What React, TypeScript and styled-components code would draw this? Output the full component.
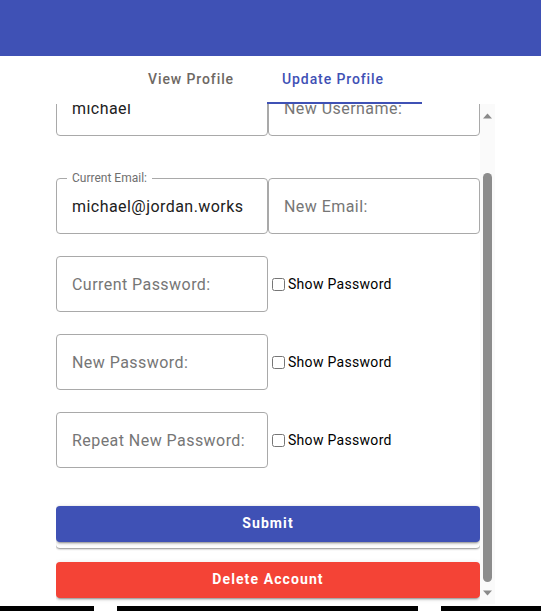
import React, { useLayoutEffect, useRef } from "react";
import styled, { createGlobalStyle } from "styled-components";

const Global = createGlobalStyle`
  html, body { margin: 0; padding: 0; overflow: hidden; background: #fff; }
  body { font-family: Roboto, "Liberation Sans", Arial, sans-serif; }
  * { box-sizing: border-box; }
`;

const Page = styled.div`
  width: 541px;
  height: 611px;
  display: flex;
  flex-direction: column;
`;

const Header = styled.header`
  height: 56px;
  background: #3f51b5;
  flex: none;
`;

const TabBar = styled.nav`
  position: relative;
  height: 48px;
  flex: none;
  display: flex;
  align-items: center;
  padding-left: 132px;
  gap: 16px;
`;

const Tab = styled.button<{ $active?: boolean }>`
  border: 0;
  background: none;
  padding: 0 16px 3px;
  height: 48px;
  font-family: Roboto, sans-serif;
  font-size: 14px;
  font-weight: 500;
  letter-spacing: 0.9px;
  white-space: nowrap;
  color: ${(p) => (p.$active ? "#3f51b5" : "#6e6863")};
  cursor: pointer;
`;

const Indicator = styled.span`
  position: absolute;
  left: 267px;
  bottom: 0;
  width: 155px;
  height: 2px;
  background: #3f51b5;
`;

const ScrollArea = styled.div`
  margin-left: 56px;
  width: 439px;
  height: 500px;
  flex: none;
  display: flex;
`;

const Viewport = styled.div`
  width: 424px;
  height: 500px;
  overflow: hidden;
  flex: none;
`;

const ScrollBar = styled.div`
  width: 15px;
  height: 500px;
  flex: none;
  background: #fafafa;
  display: flex;
  flex-direction: column;
  align-items: center;
`;

const Arrow = styled.svg<{ $mt: number }>`
  display: block;
  width: 9px;
  height: 6px;
  margin-top: ${(p) => p.$mt}px;
  flex: none;
`;

const Thumb = styled.div`
  width: 9px;
  height: 409px;
  margin-top: 54px;
  border-radius: 5px;
  background: #8c8c8c;
  flex: none;
`;

const Content = styled.div`
  width: 424px;
  padding: 42px 0 16px;
  display: flex;
  flex-direction: column;
`;

const Row = styled.div<{ $mt?: number }>`
  display: grid;
  grid-template-columns: 212px 212px;
  align-items: center;
  margin-top: ${(p) => p.$mt ?? 0}px;
`;

const Field = styled.div`
  position: relative;
  height: 56px;
  border: 1px solid #a9a9a9;
  border-radius: 4px;
  display: flex;
  align-items: center;
`;

const FloatLabel = styled.span`
  position: absolute;
  left: 10px;
  top: -7px;
  padding: 0 5px;
  background: #fff;
  font-size: 12px;
  line-height: 12px;
  color: #6f6f6f;
`;

const Input = styled.input`
  border: 0;
  outline: none;
  background: transparent;
  width: 100%;
  height: 100%;
  padding: 0 15px;
  font-family: Roboto, sans-serif;
  font-size: 16px;
  color: #212121;
  letter-spacing: 0.45px;
  &::placeholder { color: #767676; opacity: 1; }
`;

const ShowLabel = styled.label`
  display: flex;
  align-items: center;
  font-family: Roboto, sans-serif;
  font-size: 14px;
  letter-spacing: 0.3px;
  color: #000;
  input { margin: 3px 3px 3px 4px; width: 13px; height: 13px; }
`;

const ButtonShell = styled.div`
  height: 42px;
  border-radius: 4px;
  box-shadow: 0 1px 2px rgba(0, 0, 0, 0.45);
  margin-top: 38px;
`;

const ActionButton = styled.button<{ $color: string; $mt?: number }>`
  display: block;
  width: 424px;
  height: 36px;
  margin-top: ${(p) => p.$mt ?? 0}px;
  padding: 0 0 2px;
  border: 0;
  border-radius: 4px;
  background: ${(p) => p.$color};
  color: #fff;
  font-family: Roboto, sans-serif;
  font-size: 14px;
  font-weight: 700;
  letter-spacing: 1.1px;
  box-shadow: 0 3px 1px -2px rgba(0,0,0,.2), 0 2px 2px 0 rgba(0,0,0,.14), 0 1px 5px 0 rgba(0,0,0,.12);
  cursor: pointer;
`;

const Footer = styled.div`
  margin-top: 2px;
  height: 5px;
  display: flex;
  gap: 23px;
`;

const FootBar = styled.div<{ $w: number }>`
  width: ${(p) => p.$w}px;
  height: 5px;
  background: #000;
  flex: none;
`;

function TextBox({ label, value, placeholder, type }: { label?: string; value?: string; placeholder?: string; type?: string }) {
  return (
    <Field>
      {label && <FloatLabel>{label}</FloatLabel>}
      <Input readOnly type={type ?? "text"} defaultValue={value} placeholder={placeholder} />
    </Field>
  );
}

function PasswordRow({ placeholder, mt }: { placeholder: string; mt: number }) {
  return (
    <Row $mt={mt}>
      <TextBox type="password" placeholder={placeholder} />
      <ShowLabel>
        <input type="checkbox" />
        Show Password
      </ShowLabel>
    </Row>
  );
}

export default function App() {
  const ref = useRef<HTMLDivElement>(null);
  useLayoutEffect(() => {
    if (ref.current) ref.current.scrollTop = 66;
  }, []);
  return (
    <>
      <Global />
      <Page>
        <Header />
        <TabBar>
          <Tab>View Profile</Tab>
          <Tab $active>Update Profile</Tab>
          <Indicator />
        </TabBar>
        <ScrollArea>
          <Viewport ref={ref}>
            <Content>
              <Row>
                <TextBox value="michael" />
                <TextBox placeholder="New Username:" />
              </Row>
              <Row $mt={42}>
                <TextBox label="Current Email:" value="michael@jordan.works" />
                <TextBox placeholder="New Email:" />
              </Row>
              <PasswordRow placeholder="Current Password:" mt={22} />
              <PasswordRow placeholder="New Password:" mt={22} />
              <PasswordRow placeholder="Repeat New Password:" mt={22} />
              <ButtonShell>
                <ActionButton $color="#3f51b5">Submit</ActionButton>
              </ButtonShell>
              <ActionButton $color="#f44336" $mt={14}>Delete Account</ActionButton>
            </Content>
          </Viewport>
          <ScrollBar>
            <Arrow $mt={9} viewBox="0 0 9 6"><polygon points="4.5,0.5 9,5.5 0,5.5" fill="#8a8a8a" /></Arrow>
            <Thumb />
            <Arrow $mt={8} viewBox="0 0 9 6"><polygon points="0,0.5 9,0.5 4.5,5.5" fill="#8a8a8a" /></Arrow>
          </ScrollBar>
        </ScrollArea>
        <Footer>
          <FootBar $w={94} />
          <FootBar $w={301} />
          <FootBar $w={101} />
        </Footer>
      </Page>
    </>
  );
}
